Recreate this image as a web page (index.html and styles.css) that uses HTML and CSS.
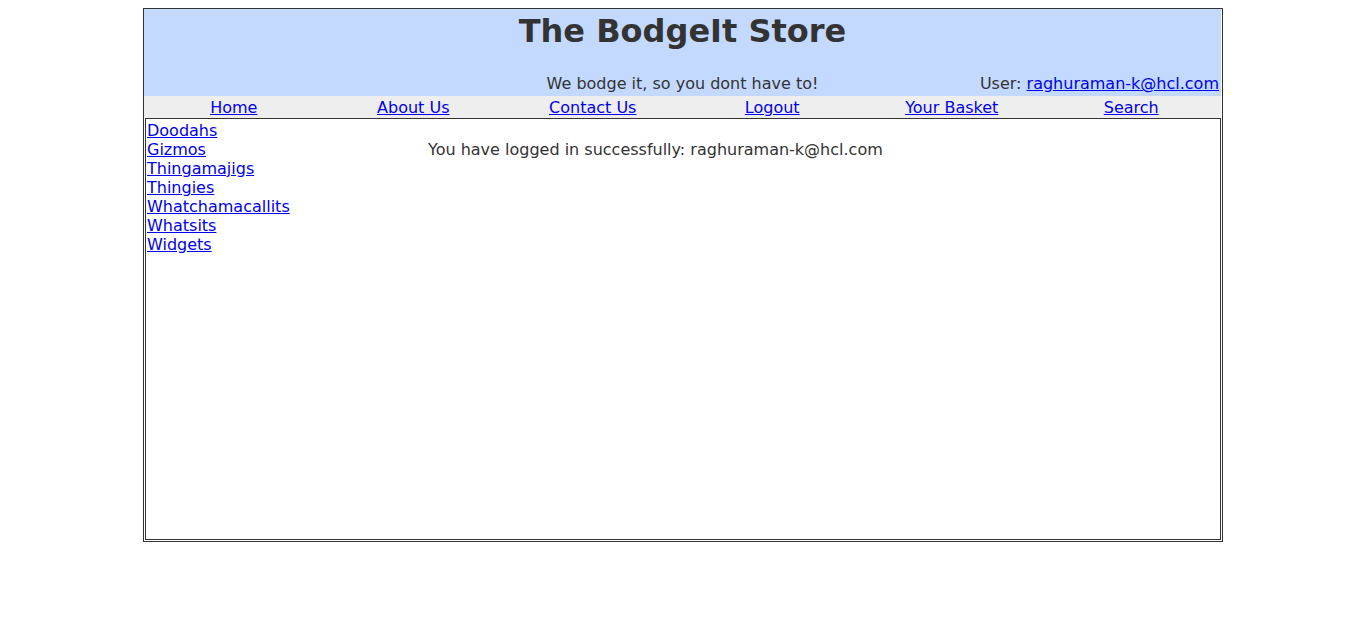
FILE: index.html
```html
<!DOCTYPE html>
<html>
<head>
<meta charset="utf-8">
<title>The BodgeIt Store</title>
<link rel="stylesheet" href="styles.css">
</head>
<body>
<div class="page">
  <div class="header">
    <h1 class="title">The BodgeIt Store</h1>
    <div class="subrow">
      <div class="sub-left">&nbsp;</div>
      <div class="sub-mid">We bodge it, so you dont have to!</div>
      <div class="sub-right">User: <a href="#">raghuraman-k@hcl.com</a></div>
    </div>
  </div>
  <nav class="nav">
    <a href="#">Home</a>
    <a href="#">About Us</a>
    <a href="#">Contact Us</a>
    <a href="#">Logout</a>
    <a href="#">Your Basket</a>
    <a href="#">Search</a>
  </nav>
  <div class="content">
    <div class="sidebar">
      <a href="#">Doodahs</a>
      <a href="#">Gizmos</a>
      <a href="#">Thingamajigs</a>
      <a href="#">Thingies</a>
      <a href="#">Whatchamacallits</a>
      <a href="#">Whatsits</a>
      <a href="#">Widgets</a>
    </div>
    <div class="main">
      <p class="message">You have logged in successfully: raghuraman-k@hcl.com</p>
    </div>
  </div>
</div>
</body>
</html>
```

FILE: styles.css
```css
html, body {
  background: #ffffff;
}
body {
  margin: 8px;
  font-family: "DejaVu Sans", Verdana, sans-serif;
  font-size: 16px;
  line-height: 19px;
  color: #333333;
}
a {
  color: #0000ee;
  text-decoration: underline;
}
.page {
  width: 1080px;
  height: 534px;
  box-sizing: border-box;
  margin: 0 auto;
  border: 1px solid #333333;
  padding: 0 1px 1px 0;
  display: flex;
  flex-direction: column;
}
.header {
  background: #c3d9ff;
  height: 87px;
  box-sizing: border-box;
}
.title {
  margin: 0 0 23px 0;
  padding-top: 2px;
  font-size: 32px;
  line-height: 40px;
  font-weight: bold;
  text-align: center;
  color: #333333;
}
.subrow {
  display: grid;
  grid-template-columns: 30% 40% 30%;
  line-height: 19px;
}
.sub-mid {
  text-align: center;
}
.sub-right {
  text-align: right;
  padding-right: 2px;
}
.nav {
  background: #eeeeee;
  height: 22px;
  box-sizing: border-box;
  padding-top: 1px;
  display: grid;
  grid-template-columns: repeat(6, 1fr);
  line-height: 21px;
  text-align: center;
}
.content {
  flex: 1;
  margin-left: 1px;
  border: 1px solid #333333;
  padding: 2px 1px 1px 1px;
  display: grid;
  grid-template-columns: 281px 1fr;
  align-items: start;
}
.sidebar {
  display: flex;
  flex-direction: column;
  align-items: flex-start;
}
.message {
  margin: 19px 0 0 0;
  white-space: nowrap;
}
```
